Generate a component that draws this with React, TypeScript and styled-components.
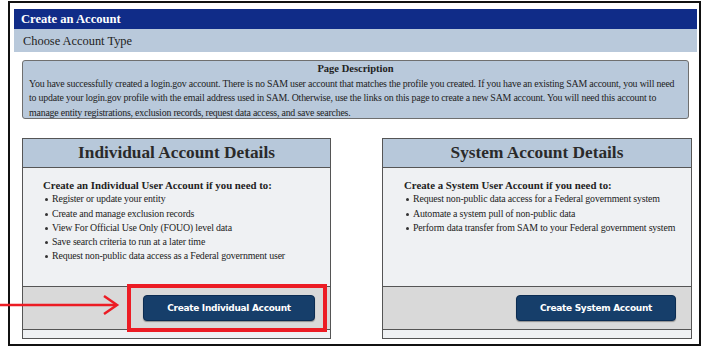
import styled, { createGlobalStyle } from 'styled-components'

const GlobalStyle = createGlobalStyle`
  body {
    margin: 0;
    background: #ffffff;
    font-family: 'Liberation Serif', 'DejaVu Serif', serif;
    color: #222222;
  }
`

const Page = styled.div`
  position: relative;
  width: 704px;
  height: 347px;
  overflow: hidden;
`

const Frame = styled.div`
  box-sizing: border-box;
  margin: 1px 0 0 8px;
  width: 693px;
  height: 345px;
  border: 2px solid #111111;
  padding: 6px 2px 0 4px;
`

const TitleBar = styled.div`
  height: 20px;
  background: #102c88;
  color: #ffffff;
  font-weight: bold;
  font-size: 12.6px;
  line-height: 20px;
  padding-left: 7px;
`

const SubBar = styled.div`
  height: 23px;
  background: #b9c9db;
  font-size: 12.4px;
  line-height: 24px;
  padding-left: 9px;
`

const Description = styled.div`
  box-sizing: border-box;
  margin: 8px 8px 0 8px;
  height: 59px;
  background: #b9c9db;
  border: 1px solid #6f6f6f;
  border-radius: 3px;
  padding: 1px 6px 0 6px;
  font-size: 9.9px;
  letter-spacing: -0.2px;
  line-height: 14.5px;

  h4 {
    margin: 0;
    text-align: center;
    font-size: 10.5px;
    letter-spacing: 0;
    font-weight: bold;
  }

  p {
    margin: 0;
  }
`

const CardRow = styled.div`
  display: flex;
  gap: 51px;
  margin: 19px 0 0 8px;
`

const Card = styled.div<{ $width: number }>`
  box-sizing: border-box;
  width: ${(p) => p.$width}px;
  height: 201px;
  border: 1px solid #555555;
  background: #eff1f3;
  display: flex;
  flex-direction: column;
`

const CardHeader = styled.div`
  height: 28px;
  background: #b7c8da;
  border-bottom: 1px solid #555555;
  text-align: center;
  font-size: 17.3px;
  font-weight: bold;
  line-height: 28px;
  color: #2a2a2a;
`

const CardBody = styled.div<{ $pad: number }>`
  flex: 1;
  padding: 10px 0 0 ${(p) => p.$pad}px;
  font-size: 9.9px;
  letter-spacing: -0.15px;
  line-height: 14.3px;

  strong {
    display: block;
    font-size: 10.8px;
    letter-spacing: 0;
    margin-bottom: 0;
  }
`

const List = styled.ul`
  margin: 0;
  padding: 0 0 0 9px;
  list-style: none;

  li {
    position: relative;
    white-space: nowrap;
  }

  li::before {
    content: '';
    position: absolute;
    left: -7px;
    top: 6px;
    width: 3px;
    height: 3px;
    border-radius: 50%;
    background: #333333;
  }
`

const Footer = styled.div`
  position: relative;
  height: 42px;
  background: #d9d9d9;
  border-top: 1px solid #555555;
  border-bottom: 1px solid #555555;
  display: flex;
  justify-content: flex-end;
  align-items: center;
  padding-right: 15px;
  margin-bottom: 8px;
`

const Highlight = styled.div`
  position: absolute;
  left: 104px;
  top: -3px;
  width: 200px;
  height: 48px;
  box-sizing: border-box;
  border: 4px solid #ec1c24;
`

const ActionButton = styled.button<{ $width: number }>`
  position: relative;
  height: 26px;
  width: ${(p) => p.$width}px;
  border: 1px solid #0b2c52;
  border-radius: 4px;
  background: #163e6a;
  color: #ffffff;
  font-family: 'DejaVu Sans', Verdana, sans-serif;
  font-weight: bold;
  font-size: 9px;
  letter-spacing: -0.3px;
  box-shadow: 0 1px 1px rgba(0, 0, 0, 0.35);
  padding: 0;
`

const Arrow = styled.svg`
  position: absolute;
  left: 0;
  top: 294px;
`

const individualItems = [
  'Register or update your entity',
  'Create and manage exclusion records',
  'View For Official Use Only (FOUO) level data',
  'Save search criteria to run at a later time',
  'Request non-public data access as a Federal government user',
]

const systemItems = [
  'Request non-public data access for a Federal government system',
  'Automate a system pull of non-public data',
  'Perform data transfer from SAM to your Federal government system',
]

export default function App() {
  return (
    <Page>
      <GlobalStyle />
      <Frame>
        <TitleBar>Create an Account</TitleBar>
        <SubBar>Choose Account Type</SubBar>
        <Description>
          <h4>Page Description</h4>
          <p>
            You have successfully created a login.gov account. There is no SAM user account that
            matches the profile you created. If you have an existing SAM account, you will need to
            update your login.gov profile with the email address used in SAM. Otherwise, use the
            links on this page to create a new SAM account. You will need this account to manage
            entity registrations, exclusion records, request data access, and save searches.
          </p>
        </Description>
        <CardRow>
          <Card $width={309}>
            <CardHeader>Individual Account Details</CardHeader>
            <CardBody $pad={20}>
              <strong>Create an Individual User Account if you need to:</strong>
              <List>
                {individualItems.map((item) => (
                  <li key={item}>{item}</li>
                ))}
              </List>
            </CardBody>
            <Footer>
              <Highlight />
              <ActionButton $width={172}>Create Individual Account</ActionButton>
            </Footer>
          </Card>
          <Card $width={310}>
            <CardHeader>System Account Details</CardHeader>
            <CardBody $pad={21}>
              <strong>Create a System User Account if you need to:</strong>
              <List>
                {systemItems.map((item) => (
                  <li key={item}>{item}</li>
                ))}
              </List>
            </CardBody>
            <Footer>
              <ActionButton $width={160}>Create System Account</ActionButton>
            </Footer>
          </Card>
        </CardRow>
      </Frame>
      <Arrow width="122" height="22" viewBox="0 0 122 22">
        <line x1="0" y1="11" x2="116" y2="11" stroke="#ec1c24" strokeWidth="2.5" />
        <polyline points="104,2 117,11 104,20" fill="none" stroke="#ec1c24" strokeWidth="2.5" />
      </Arrow>
    </Page>
  )
}
